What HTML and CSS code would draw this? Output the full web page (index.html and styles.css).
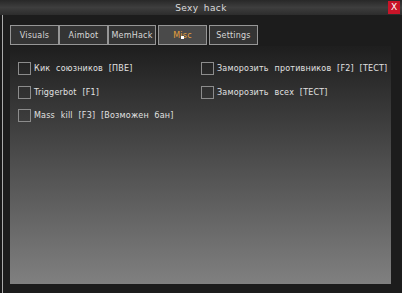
FILE: index.html
```html
<!DOCTYPE html>
<html>
	<head>
		<meta charset="utf-8">
		<link rel="stylesheet" href="styles.css">
	</head>
	<body>
		<div class="titleBar">
			<span class="title">Sexy hack</span>
			<div class="closeButton">X</div>
		</div>

		<div class="frame">
			<div class="tabs">
				<div class="tab">Visuals</div>
				<div class="tab">Aimbot</div>
				<div class="tab">MemHack</div>
				<div class="tab active">Misc<span class="cursor"></span></div>
				<div class="tab">Settings</div>
			</div>

			<div class="panel">
				<div class="option"><span class="box"></span><label>Кик союзников [ПВЕ]</label></div>
				<div class="option"><span class="box"></span><label>Заморозить противников [F2] [ТЕСТ]</label></div>
				<div class="option"><span class="box"></span><label>Triggerbot [F1]</label></div>
				<div class="option"><span class="box"></span><label>Заморозить всех [ТЕСТ]</label></div>
				<div class="option"><span class="box"></span><label>Mass kill [F3] [Возможен бан]</label></div>
			</div>
		</div>
	</body>
</html>
```

FILE: styles.css
```css
body {
	margin: 0;
	width: 402px;
	height: 293px;
	overflow: hidden;
	background-color: rgb(24, 24, 24);
	color: rgb(225, 225, 225);
	font-family: "DejaVu Sans", sans-serif;
	font-size: 8px;
}

.titleBar {
	display: flex;
	align-items: center;
	justify-content: center;
	height: 15px;
	position: relative;
	background: linear-gradient(rgb(40, 40, 40), rgb(62, 62, 62) 50%, rgb(44, 44, 44));
}
.title {
	font-size: 9px;
	letter-spacing: 0.4px;
	word-spacing: 2px;
	color: rgb(220, 220, 220);
}
.closeButton {
	position: absolute;
	right: 2px;
	top: 1px;
	width: 12px;
	height: 13px;
	background-color: rgb(200, 20, 40);
	color: white;
	font-size: 9px;
	line-height: 13px;
	text-align: center;
}

.frame {
	margin: 0 0 2px 2px;
	height: 267px;
	padding: 10px 11px 6px 7px;
	border-left: 1px solid rgb(170, 170, 170);
	border-bottom: 1px solid rgb(170, 170, 170);
	background-color: rgb(28, 28, 28);
}

.tabs {
	display: flex;
	height: 20px;
}
.tab {
	position: relative;
	display: flex;
	align-items: center;
	justify-content: center;
	box-sizing: border-box;
	width: 49px;
	height: 20px;
	border: 1px solid rgb(150, 150, 150);
	background-color: rgb(52, 52, 52);
	color: rgb(215, 215, 215);
	letter-spacing: 0.2px;
}
.tab:nth-child(3) {
	width: 48px;
	margin-right: 2px;
}
.tab:nth-child(4) {
	margin-right: 2px;
}
.tab.active {
	background-color: rgb(74, 74, 74);
	color: rgb(230, 160, 60);
}
.cursor {
	position: absolute;
	left: 22px;
	top: 10px;
	width: 3px;
	height: 3px;
	background-color: white;
}

.panel {
	display: grid;
	grid-template-columns: 183px auto;
	grid-auto-rows: 23.5px;
	align-content: start;
	height: 222px;
	margin-top: 1px;
	padding: 16px 0 0 8px;
	background: linear-gradient(rgb(30, 30, 30), rgb(128, 128, 128));
}
.option {
	display: flex;
	align-items: center;
	height: 13px;
}
.box {
	box-sizing: border-box;
	width: 13px;
	height: 13px;
	margin-right: 3px;
	border: 1px solid rgb(140, 140, 140);
}
.option label {
	letter-spacing: 0.2px;
	word-spacing: 3px;
	color: rgb(225, 225, 225);
}
```
